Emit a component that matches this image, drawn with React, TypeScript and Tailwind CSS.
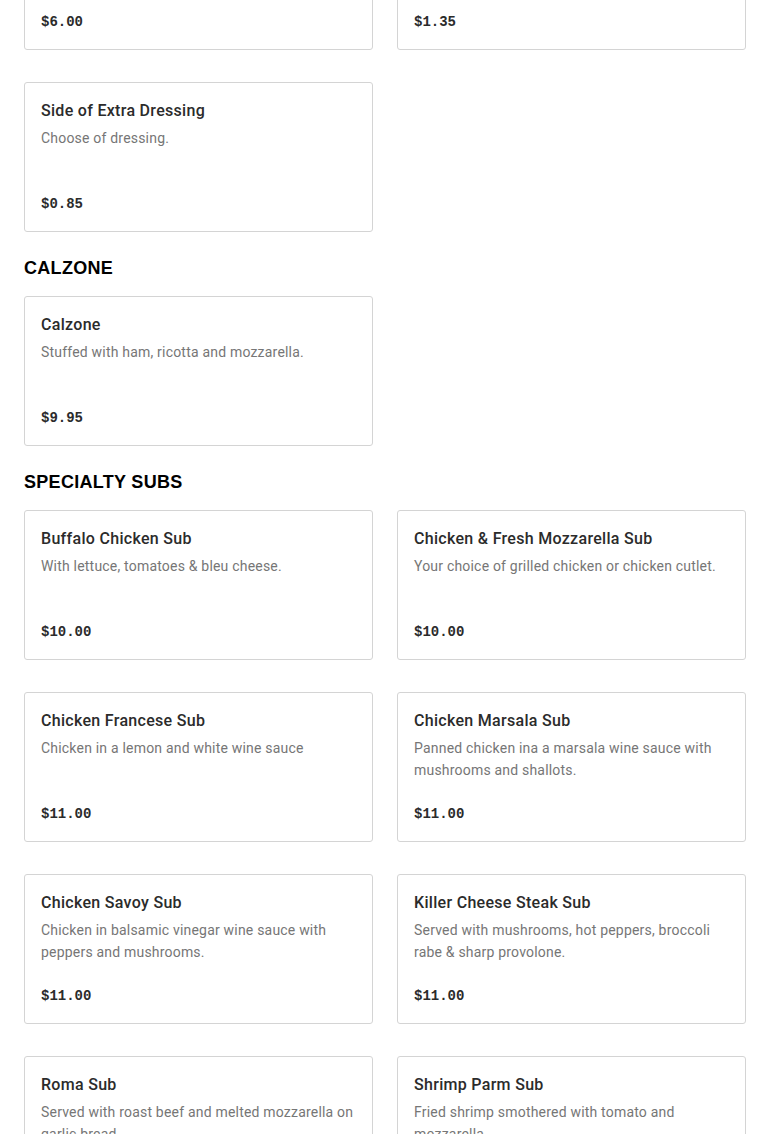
type Item = { name: string; desc: string; price: string }

type Section = { title?: string; items: Item[] }

const SECTIONS: Section[] = [
  {
    items: [
      { name: 'Garden Salad', desc: 'Lettuce, tomatoes, cucumbers and onions.', price: '$6.00' },
      { name: 'Side of Croutons', desc: 'Extra croutons for your salad.', price: '$1.35' },
      { name: 'Side of Extra Dressing', desc: 'Choose of dressing.', price: '$0.85' },
    ],
  },
  {
    title: 'Calzone',
    items: [{ name: 'Calzone', desc: 'Stuffed with ham, ricotta and mozzarella.', price: '$9.95' }],
  },
  {
    title: 'Specialty Subs',
    items: [
      { name: 'Buffalo Chicken Sub', desc: 'With lettuce, tomatoes & bleu cheese.', price: '$10.00' },
      { name: 'Chicken & Fresh Mozzarella Sub', desc: 'Your choice of grilled chicken or chicken cutlet.', price: '$10.00' },
      { name: 'Chicken Francese Sub', desc: 'Chicken in a lemon and white wine sauce', price: '$11.00' },
      { name: 'Chicken Marsala Sub', desc: 'Panned chicken ina a marsala wine sauce with mushrooms and shallots.', price: '$11.00' },
      { name: 'Chicken Savoy Sub', desc: 'Chicken in balsamic vinegar wine sauce with peppers and mushrooms.', price: '$11.00' },
      { name: 'Killer Cheese Steak Sub', desc: 'Served with mushrooms, hot peppers, broccoli rabe & sharp provolone.', price: '$11.00' },
      { name: 'Roma Sub', desc: 'Served with roast beef and melted mozzarella on garlic bread.', price: '$11.00' },
      { name: 'Shrimp Parm Sub', desc: 'Fried shrimp smothered with tomato and mozzarella.', price: '$12.00' },
    ],
  },
]

function ItemCard({ item }: { item: Item }) {
  return (
    <div className="flex h-[150px] flex-col rounded-[3px] border border-[#d4d4d4] bg-white p-4">
      <div className="text-[16px] font-medium leading-6 tracking-[0.3px] text-[#2b2b2b]">{item.name}</div>
      <div className="mt-1 text-[14px] leading-[22px] tracking-[0.2px] text-[#767676]">{item.desc}</div>
      <div className="mt-auto font-['Liberation_Mono',monospace] text-[14px] font-bold leading-[22px] text-[#2b2b2b]">
        {item.price}
      </div>
    </div>
  )
}

export default function App() {
  return (
    <div className="min-h-screen overflow-hidden bg-white font-['Roboto','Liberation_Sans',sans-serif]">
      <div className="-mt-[100px] px-6">
        {SECTIONS.map((section, i) => (
          <div key={i} className={i === 0 ? '' : 'mt-[25px]'}>
            {section.title && (
              <h2 className="mb-[17px] font-['Liberation_Sans',sans-serif] text-[18px] font-bold uppercase leading-[22px] tracking-[0.3px] text-black">
                {section.title}
              </h2>
            )}
            <div className="grid grid-cols-2 gap-x-6 gap-y-8">
              {section.items.map((item) => (
                <ItemCard key={item.name} item={item} />
              ))}
            </div>
          </div>
        ))}
      </div>
    </div>
  )
}
